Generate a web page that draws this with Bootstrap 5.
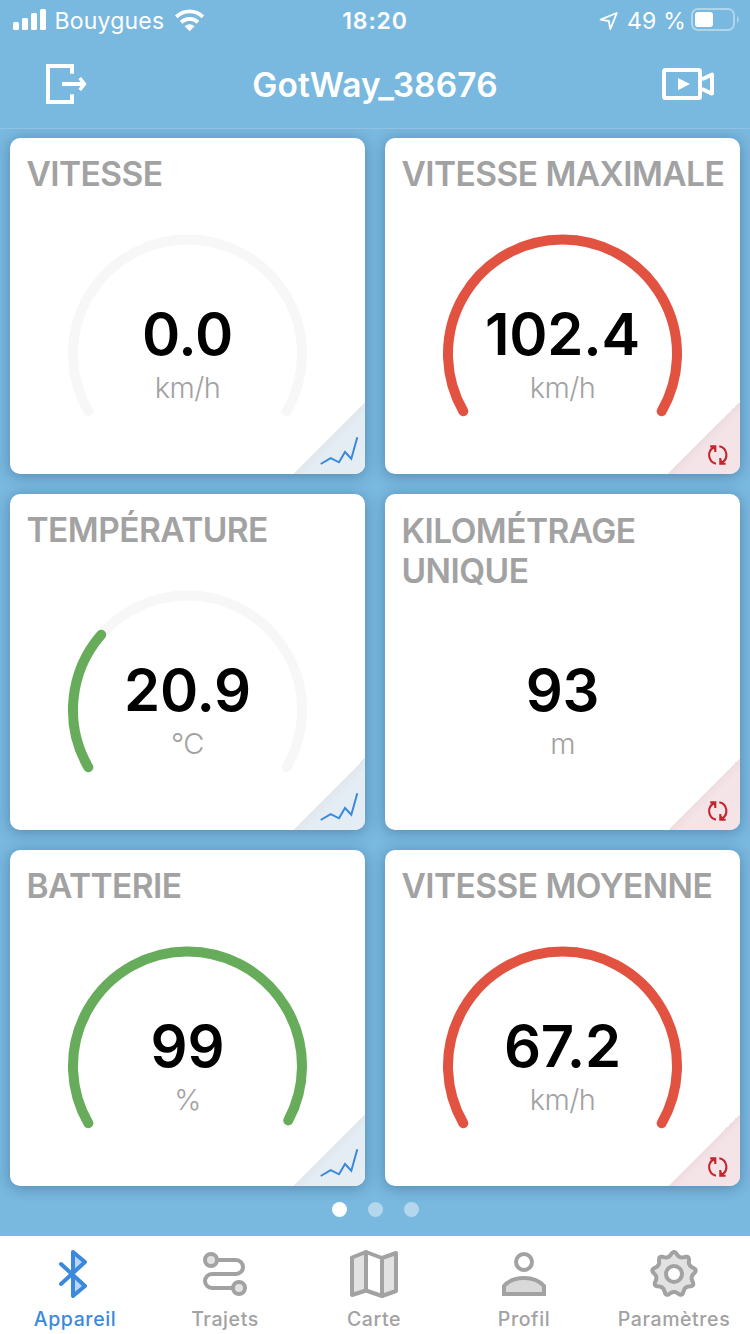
<!DOCTYPE html>
<html lang="fr">
<head>
<meta charset="utf-8">
<meta name="viewport" content="width=device-width, initial-scale=1">
<title>GotWay_38676</title>
<link href="https://cdn.jsdelivr.net/npm/bootstrap@5.3.0/dist/css/bootstrap.min.css" rel="stylesheet">
<style>
  body { width: 750px; height: 1334px; background: #79b8df; font-family: Inter, "Liberation Sans", sans-serif; overflow: hidden; }
  svg { display: block; overflow: visible; }
  .status { height: 40px; font-size: 23px; line-height: 42px; letter-spacing: .2px; }
  .status > div { flex: 1 1 0; }
  .clock { font-weight: 580; letter-spacing: .8px; }
  .titlebar { height: 88px; }
  .titlebar h1 { margin-top: 25px; font-size: 33.5px; line-height: 40px; font-weight: 570; letter-spacing: .15px; }
  .board { height: 1108px; border-top: 1px solid #8ec3e5; padding: 9px 10px 0; overflow: hidden; }
  .tiles { display: grid; grid-template-columns: 355px 355px; gap: 20px; }
  .tile { height: 336px; border: 0; border-radius: 10px; box-shadow: 0 2px 14px rgba(10, 40, 80, .33); }
  .tile h2 { margin: 16px 0 0 16.5px; font-size: 33.5px; line-height: 40px; font-weight: 560; color: #a2a2a2; letter-spacing: -.55px; white-space: nowrap; }
  .tile h2.two-lines { margin-top: 17px; }
  .gauge { top: 96px; left: 57px; }
  .gauge path { fill: none; stroke-width: 10; stroke-linecap: round; stroke: #f7f7f7; }
  .gauge .hot { stroke: #e25241; }
  .gauge .good { stroke: #67ac5b; }
  .reading { top: 166px; left: 0; right: 0; }
  .number { font-size: 58px; line-height: 60px; font-weight: 600; color: #000; letter-spacing: -.2px; }
  .unit { margin-top: 4px; font-size: 29px; line-height: 40px; font-weight: 280; color: #a2a2a2; letter-spacing: -.6px; }
  .fold { right: 0; bottom: 0; width: 72px; height: 72px; border-bottom-right-radius: 10px; background: linear-gradient(135deg, transparent 50%, #dfe6ec 50%, #e5edf4 59%); }
  .fold.reset { background: linear-gradient(135deg, transparent 50%, #eedde0 50%, #f5e4e7 59%); }
  .pager { margin-top: 16px; gap: 21px; padding-left: 1px; }
  .pager span { width: 15px; height: 15px; border-radius: 50%; background: #b4d7ed; }
  .pager .on { background: #fff; }
  .tabs { height: 98px; display: grid; grid-template-columns: 150px 150px 148px 152px 148px; }
  .tab { padding-top: 14px; font-size: 19.5px; line-height: 24px; font-weight: 450; letter-spacing: .6px; color: #a2a2a2; }
  .tab.on { color: #3b89dc; }
  .tab svg { margin-bottom: 9px; fill: none; stroke: currentColor; stroke-width: 4; stroke-linejoin: round; stroke-linecap: round; }
</style>
</head>
<body>
<svg width="0" height="0" class="position-absolute">
  <defs>
    <g id="trend"><path d="M27.7 62L37.7 56.2L46 60.3L52 50L58.3 56.8L64.3 35.3" fill="none" stroke="#3b89dc" stroke-width="2"/></g>
    <g id="cycle" fill="none" stroke="#c4262e" stroke-width="2.1"><path d="M48 61.8A8.9 8.9 0 0 1 46 45.2M51.3 44.2A8.9 8.9 0 0 1 53.6 60.8M42.2 44.4H47.3V50M57.6 61.8H52.3V56"/><path d="M43 44H48V49.5ZM57 62H52V56.5Z" fill="#c4262e" stroke="none"/></g>
  </defs>
</svg>

<header class="text-white">
  <div class="status d-flex">
    <div class="d-flex">
      <svg width="54.5" height="40" fill="#fff"><rect x="13" y="22" width="6" height="8" rx="1.5"/><rect x="22" y="18" width="6" height="12" rx="1.5"/><rect x="31" y="13" width="6" height="17" rx="1.5"/><rect x="40" y="9" width="6" height="21" rx="1.5"/></svg>
      <span>Bouygues</span>
      <svg width="40" height="40" viewBox="164 0 40 40" fill="none" stroke="#fff" stroke-width="3.8"><path d="M176.3 16.8A18.8 18.8 0 0 1 202.9 16.8M181.2 22.3A11.8 11.8 0 0 1 198 22.3"/><path d="M184.6 26.3Q189.6 22.4 194.6 26.3L189.6 31.3Z" fill="#fff" stroke="none"/></svg>
    </div>
    <div class="clock text-center">18:20</div>
    <div class="d-flex justify-content-end">
      <svg width="28" height="40" viewBox="600 0 28 40" fill="none" stroke="#fff" stroke-width="1.8" stroke-linejoin="round"><path d="M617.8 13L601.5 19.6L609.8 21L611.3 29.2Z"/></svg>
      <span>49 %</span>
      <svg width="64" height="40" viewBox="686 0 64 40"><rect x="692" y="9" width="42" height="21" rx="6" fill="none" stroke="#afd5ec" stroke-width="2"/><rect x="695" y="12" width="18" height="15" rx="3" fill="#fff"/><path d="M737 16Q741 19.5 737 23Z" fill="#afd5ec"/></svg>
    </div>
  </div>
  <div class="titlebar d-flex justify-content-between">
    <svg width="100" height="88" viewBox="0 40 100 88" fill="none" stroke="#fff" stroke-width="4"><path d="M72 73.7V66H48V102H72V94.3M62 84H84"/><path d="M79.7 78L84.4 84L79.7 90" stroke-width="3.6"/></svg>
    <h1 class="mb-0">GotWay_38676</h1>
    <svg width="100" height="88" viewBox="650 40 100 88" fill="none" stroke="#fff" stroke-width="4"><rect x="664" y="70" width="36" height="28" rx="1.5"/><path d="M702 79.3L712 74.6V93.6L702 89" stroke-linejoin="round"/><path d="M678 78L690 84L678 90.2Z" fill="#fff" stroke="none"/></svg>
  </div>
</header>

<main class="board">
  <div class="tiles">
    <section class="card tile">
      <h2>VITESSE</h2>
      <svg class="gauge position-absolute" width="240" height="190" viewBox="-.5 0 240 190"><path d="M20.84 177.25A114.5 114.5 0 1 1 219.16 177.25"/></svg>
      <div class="reading position-absolute text-center"><div class="number">0.0</div><div class="unit">km/h</div></div>
      <div class="fold position-absolute"><svg width="72" height="72"><use href="#trend"/></svg></div>
    </section>
    <section class="card tile">
      <h2>VITESSE MAXIMALE</h2>
      <svg class="gauge position-absolute" width="240" height="190" viewBox="-.5 0 240 190"><path class="hot" d="M20.84 177.25A114.5 114.5 0 1 1 219.16 177.25"/></svg>
      <div class="reading position-absolute text-center"><div class="number">102.4</div><div class="unit">km/h</div></div>
      <div class="fold reset position-absolute"><svg width="72" height="72"><use href="#cycle"/></svg></div>
    </section>
    <section class="card tile">
      <h2>TEMPÉRATURE</h2>
      <svg class="gauge position-absolute" width="240" height="190" viewBox="-.5 0 240 190"><path d="M20.84 177.25A114.5 114.5 0 1 1 219.16 177.25"/><path class="good" d="M20.84 177.25A114.5 114.5 0 0 1 33.7 44.7"/></svg>
      <div class="reading position-absolute text-center"><div class="number">20.9</div><div class="unit">°C</div></div>
      <div class="fold position-absolute"><svg width="72" height="72"><use href="#trend"/></svg></div>
    </section>
    <section class="card tile">
      <h2 class="two-lines">KILOMÉTRAGE<br>UNIQUE</h2>
      <div class="reading position-absolute text-center"><div class="number">93</div><div class="unit">m</div></div>
      <div class="fold reset position-absolute"><svg width="72" height="72"><use href="#cycle"/></svg></div>
    </section>
    <section class="card tile">
      <h2>BATTERIE</h2>
      <svg class="gauge position-absolute" width="240" height="190" viewBox="-.5 0 240 190"><path d="M20.84 177.25A114.5 114.5 0 1 1 219.16 177.25"/><path class="good" d="M20.84 177.25A114.5 114.5 0 1 1 220.8 174.3"/></svg>
      <div class="reading position-absolute text-center"><div class="number">99</div><div class="unit">%</div></div>
      <div class="fold position-absolute"><svg width="72" height="72"><use href="#trend"/></svg></div>
    </section>
    <section class="card tile">
      <h2>VITESSE MOYENNE</h2>
      <svg class="gauge position-absolute" width="240" height="190" viewBox="-.5 0 240 190"><path class="hot" d="M20.84 177.25A114.5 114.5 0 1 1 219.16 177.25"/></svg>
      <div class="reading position-absolute text-center"><div class="number">67.2</div><div class="unit">km/h</div></div>
      <div class="fold reset position-absolute"><svg width="72" height="72"><use href="#cycle"/></svg></div>
    </section>
  </div>
  <div class="pager d-flex justify-content-center"><span class="on"></span><span></span><span></span></div>
</main>

<nav class="tabs bg-white">
  <div class="tab on d-flex flex-column align-items-center">
    <svg width="48" height="48"><path d="M22 25V46L34 36ZM22 23V2L34 12Z" fill="#b9d7f2" stroke="none"/><path d="M10 14L34 36L22 46V2L34 12L10 34"/></svg>
    <span>Appareil</span>
  </div>
  <div class="tab d-flex flex-column align-items-center">
    <svg width="48" height="48"><path d="M16 10H35A7 7 0 0 1 35 24H11A7 7 0 0 0 11 38H32"/><g fill="#e2e2e2"><circle cx="10" cy="10" r="6"/><circle cx="38" cy="38" r="6"/></g></svg>
    <span>Trajets</span>
  </div>
  <div class="tab d-flex flex-column align-items-center">
    <svg width="48" height="48"><path d="M2 7.5L16 2V40.5L2 45ZM32 8L46 3V41L32 46Z" fill="#e2e2e2"/><path d="M16 2L32 8M16 40.5L32 46"/></svg>
    <span>Carte</span>
  </div>
  <div class="tab d-flex flex-column align-items-center">
    <svg width="48" height="48"><circle cx="24" cy="12" r="8"/><path d="M4 44V36Q11 28 24 28Q37 28 44 36V44Z" fill="#d9d9d9" stroke-linejoin="miter"/></svg>
    <span>Profil</span>
  </div>
  <div class="tab d-flex flex-column align-items-center">
    <svg width="48" height="48"><path id="cog" fill="#e2e2e2"/><circle cx="24" cy="24" r="8" fill="#fff"/></svg>
    <span>Paramètres</span>
  </div>
</nav>

<script src="https://cdn.jsdelivr.net/npm/bootstrap@5.3.0/dist/js/bootstrap.bundle.min.js"></script>
<script>
  // Nine-toothed wheel outline
  var points = [];
  for (var i = 0; i < 180; i++) {
    var a = i * Math.PI / 90, r = 19.7 + 2 * Math.cos(9 * a) + .3 * Math.cos(18 * a);
    points.push((24 + r * Math.sin(a)).toFixed(2) + ' ' + (24 - r * Math.cos(a)).toFixed(2));
  }
  document.getElementById('cog').setAttribute('d', 'M' + points.join('L') + 'Z');
</script>
</body>
</html>
